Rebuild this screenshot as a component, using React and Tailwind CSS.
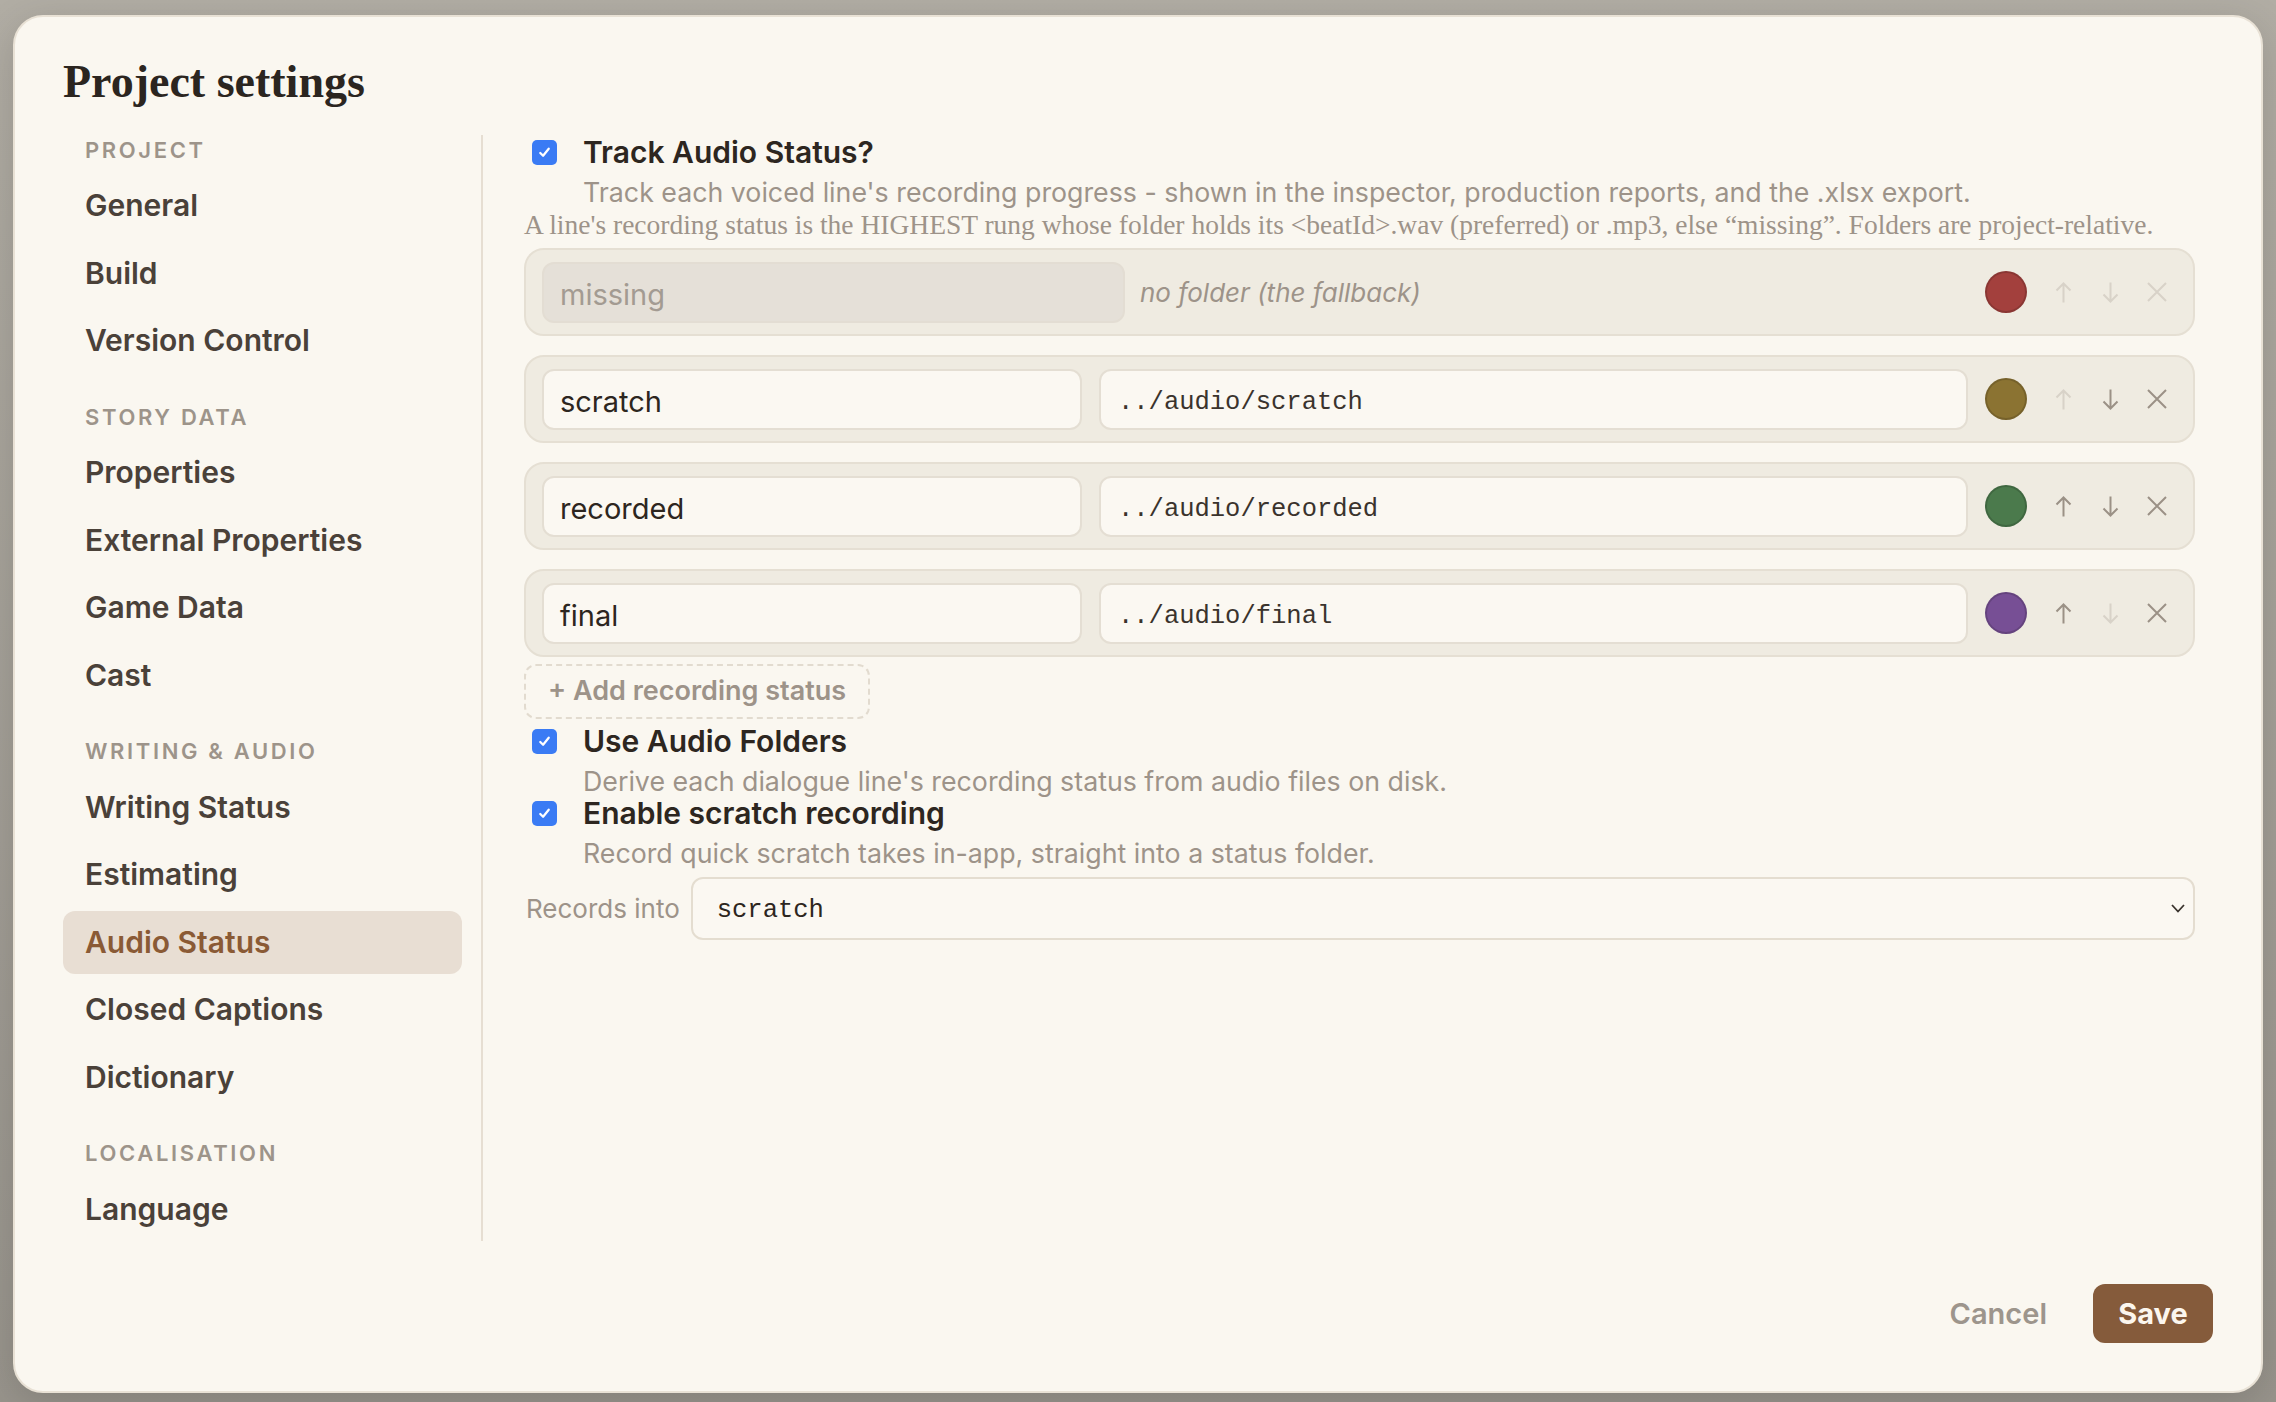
import React from 'react'

const NAV = [
  { title: 'PROJECT', items: ['General', 'Build', 'Version Control'] },
  { title: 'STORY DATA', items: ['Properties', 'External Properties', 'Game Data', 'Cast'] },
  { title: 'WRITING & AUDIO', items: ['Writing Status', 'Estimating', 'Audio Status', 'Closed Captions', 'Dictionary'] },
  { title: 'LOCALISATION', items: ['Language'] },
]

const STATUSES = [
  { name: 'scratch', path: '../audio/scratch', color: '#8b7332', up: false, down: true },
  { name: 'recorded', path: '../audio/recorded', color: '#4b7a4c', up: true, down: true },
  { name: 'final', path: '../audio/final', color: '#774f95', up: true, down: false },
]

function Checkbox() {
  return (
    <span className="ml-[8px] mt-[4px] flex h-[25px] w-[25px] shrink-0 items-center justify-center rounded-[5px] bg-[#3a7bf4]">
      <svg width="15" height="15" viewBox="0 0 16 16" fill="none">
        <path d="M3.5 8.5l3 3 6-7.5" stroke="white" strokeWidth="2.4" strokeLinecap="round" strokeLinejoin="round" />
      </svg>
    </span>
  )
}

function Toggle({ label, desc, className = '' }) {
  return (
    <div className={`flex items-start ${className}`}>
      <Checkbox />
      <div className="ml-[26px]">
        <div className="text-[30px] leading-[32px] font-semibold text-[#2d2620]">{label}</div>
        <div className="mt-[9px] text-[26.75px] leading-[30px] text-[#9d9389]">{desc}</div>
      </div>
    </div>
  )
}

function Arrow({ dir, on }) {
  return (
    <span className="flex w-[24px] justify-center">
      <svg width="17" height="21" viewBox="0 0 17 21" fill="none"
        className={dir === 'down' ? 'rotate-180' : ''}
        stroke={on ? '#9b9186' : '#d8d2c8'} strokeWidth="2">
        <path d="M8.5 1.5v19M1.5 8.5l7-7 7 7" />
      </svg>
    </span>
  )
}

function Cross({ on }) {
  return (
    <span className="flex w-[24px] justify-center">
      <svg width="20" height="20" viewBox="0 0 20 20" fill="none" stroke={on ? '#9b9186' : '#d8d2c8'} strokeWidth="2">
        <path d="M1 1l18 18M19 1L1 19" />
      </svg>
    </span>
  )
}

function Controls({ color, up, down, remove }) {
  return (
    <div className="ml-[17px] flex items-center">
      <span className="h-[42px] w-[42px] rounded-full border-2 border-black/15" style={{ background: color }} />
      <div className="ml-[24px] flex items-center gap-[23px]">
        <Arrow dir="up" on={up} />
        <Arrow dir="down" on={down} />
        <Cross on={remove} />
      </div>
    </div>
  )
}

function StatusRow({ name, path, color, up, down }) {
  return (
    <div className="flex h-[88px] items-center rounded-[20px] border-2 border-[#e5dfd3] bg-[#efebe1] pl-[16px] pr-[24px]">
      <div className="flex h-[61px] w-[540px] items-center rounded-[12px] border-2 border-[#e4ded3] bg-[#fbf8f2] px-[16px] pt-[5px] text-[29px] text-[#2d2620]">
        {name}
      </div>
      <div className="ml-[17px] flex h-[61px] flex-1 items-center rounded-[12px] border-2 border-[#e4ded3] bg-[#fbf8f2] px-[17px] pt-[8px] font-['Liberation_Mono',monospace] text-[25.5px] text-[#3a332d]">
        {path}
      </div>
      <Controls color={color} up={up} down={down} remove />
    </div>
  )
}

function FallbackRow() {
  return (
    <div className="flex h-[88px] items-center rounded-[20px] border-2 border-[#e5dfd3] bg-[#efebe1] pl-[16px] pr-[24px]">
      <div className="flex h-[61px] w-[583px] items-center rounded-[12px] border-2 border-[#e3ddd3] bg-[#e5e0d8] px-[16px] pt-[5px] text-[29px] text-[#a39b92]">
        missing
      </div>
      <div className="ml-[15px] flex-1 pt-[1px] text-[26px] italic text-[#9d9389]">no folder (the fallback)</div>
      <Controls color="#a3403d" up={false} down={false} remove={false} />
    </div>
  )
}

function Sidebar() {
  return (
    <nav className="w-[420px] shrink-0 border-r-2 border-[#e6ded2] pr-[19px]">
      {NAV.map((sec, i) => (
        <div key={sec.title} className={i ? 'mt-[30px]' : ''}>
          <div className="flex h-[30px] items-center pl-[22px] text-[22px] font-semibold tracking-[0.12em] text-[#9d948a]">
            {sec.title}
          </div>
          <div className="mt-[9px] flex flex-col gap-[4.5px]">
            {sec.items.map(item => {
              const active = item === 'Audio Status'
              return (
                <div key={item}
                  className={`flex h-[63px] items-center rounded-[12px] pl-[22px] text-[30px] font-semibold ${active ? 'bg-[#e8ded3] text-[#8a5a35]' : 'text-[#4a4139]'}`}>
                  {item}
                </div>
              )
            })}
          </div>
        </div>
      ))}
    </nav>
  )
}

export default function App() {
  return (
    <div className="min-h-screen w-full bg-linear-to-b from-[#b1ada4] to-[#98948c] pl-[13px] pt-[15px] font-['Inter',sans-serif]">
      <div className="flex h-[1378px] w-[2250px] flex-col rounded-[30px] border-2 border-[#e8e1d5] bg-[#faf7f0] px-[48px] pb-[48px] pt-[42px] shadow-[0_10px_40px_rgba(0,0,0,0.15)]">
        <h1 className="font-['Liberation_Serif',serif] text-[46px] font-bold leading-[45px] text-[#2b2520]">
          Project settings
        </h1>

        <div className="mt-[31px] flex items-start">
          <Sidebar />

          <main className="flex-1 pl-[41px] pr-[18px]">
            <Toggle
              className="mt-[1px]"
              label="Track Audio Status?"
              desc="Track each voiced line's recording progress - shown in the inspector, production reports, and the .xlsx export."
            />
            <p className="mt-[3px] font-['Liberation_Serif',serif] text-[27.5px] leading-[30px] text-[#9d9389]">
              A line's recording status is the HIGHEST rung whose folder holds its &lt;beatId&gt;.wav (preferred) or .mp3, else “missing”. Folders are project-relative.
            </p>

            <div className="mt-[8px] flex flex-col gap-[19px]">
              <FallbackRow />
              {STATUSES.map(s => <StatusRow key={s.name} {...s} />)}
            </div>

            <button className="mt-[7px] flex h-[55px] w-[346px] items-center rounded-[12px] border-2 border-dashed border-[#e2dbcf] pl-[22px] text-[27px] font-semibold text-[#9d9389]">
              + Add recording status
            </button>

            <Toggle
              className="mt-[6px]"
              label="Use Audio Folders"
              desc="Derive each dialogue line's recording status from audio files on disk."
            />
            <Toggle
              className="mt-[1px]"
              label="Enable scratch recording"
              desc="Record quick scratch takes in-app, straight into a status folder."
            />

            <div className="mt-[9px] flex items-center">
              <span className="ml-[2px] text-[26px] text-[#9d9389]">Records into</span>
              <div className="ml-[11px] flex h-[63px] flex-1 items-center justify-between rounded-[12px] border-2 border-[#e4ddd0] bg-[#fbf8f2] pl-[24px] pr-[8px]">
                <span className="pt-[5px] font-['Liberation_Mono',monospace] text-[25.5px] text-[#2d2620]">scratch</span>
                <svg width="14" height="9" viewBox="0 0 14 9" fill="none" stroke="#3a332d" strokeWidth="1.8">
                  <path d="M1 1l6 6.5L13 1" />
                </svg>
              </div>
            </div>
          </main>
        </div>

        <div className="mt-auto flex items-center justify-end">
          <button className="mr-[46px] text-[29px] font-semibold text-[#9d958c]">Cancel</button>
          <button className="h-[59px] w-[120px] rounded-[12px] bg-[#855b3b] text-[29px] font-bold text-[#fbf6ee]">Save</button>
        </div>
      </div>
    </div>
  )
}
